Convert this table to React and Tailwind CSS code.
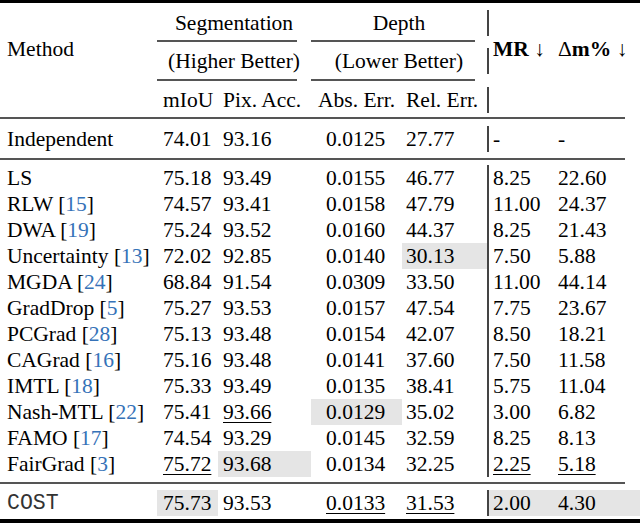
const cols = [
  'w-[157px] pl-[7px]',
  'w-[61px] pl-[6px]',
  'w-[93px] pl-[5px]',
  'w-[91px] pl-[15px]',
  'w-[85px] pl-[4px]',
  'w-[63px] pl-[4px] border-l-2 border-[#444]',
  'w-[90px] pl-[8px]',
];

const Cite = ({ n }) => (
  <>
    {' '}[<span className="text-[#3572b8]">{n}</span>]
  </>
);

// s = shaded, u = underlined
const rows = [
  ['LS', null, '75.18', '93.49', '0.0155', '46.77', '8.25', '22.60'],
  ['RLW', 15, '74.57', '93.41', '0.0158', '47.79', '11.00', '24.37'],
  ['DWA', 19, '75.24', '93.52', '0.0160', '44.37', '8.25', '21.43'],
  ['Uncertainty', 13, '72.02', '92.85', '0.0140', { v: '30.13', s: true }, '7.50', '5.88'],
  ['MGDA', 24, '68.84', '91.54', '0.0309', '33.50', '11.00', '44.14'],
  ['GradDrop', 5, '75.27', '93.53', '0.0157', '47.54', '7.75', '23.67'],
  ['PCGrad', 28, '75.13', '93.48', '0.0154', '42.07', '8.50', '18.21'],
  ['CAGrad', 16, '75.16', '93.48', '0.0141', '37.60', '7.50', '11.58'],
  ['IMTL', 18, '75.33', '93.49', '0.0135', '38.41', '5.75', '11.04'],
  ['Nash-MTL', 22, '75.41', { v: '93.66', u: true }, { v: '0.0129', s: true }, '35.02', '3.00', '6.82'],
  ['FAMO', 17, '74.54', '93.29', '0.0145', '32.59', '8.25', '8.13'],
  ['FairGrad', 3, { v: '75.72', u: true }, { v: '93.68', s: true }, '0.0134', '32.25', { v: '2.25', u: true }, { v: '5.18', u: true }],
];

function Cell({ i, c }) {
  const o = typeof c === 'string' ? { v: c } : c;
  return (
    <div className={`${cols[i]} h-[26px] ${o.s ? 'bg-[#e5e5e5]' : ''}`}>
      <span className={o.u ? 'underline decoration-1 underline-offset-[3px]' : ''}>{o.v}</span>
    </div>
  );
}

function Row({ name, cite, cells, mono }) {
  return (
    <div className="flex h-[26px]">
      <div className={`${cols[0]} h-[26px] ${mono ? "font-['Liberation_Mono',monospace] text-[#333]" : ''}`}>
        {name}
        {cite != null && <Cite n={cite} />}
      </div>
      {cells.map((c, i) => (
        <Cell key={i} i={i + 1} c={c} />
      ))}
    </div>
  );
}

const Midrule = () => <div className="w-[625px] h-[2px] bg-[#555]" />;

export default function App() {
  return (
    <div className="w-[640px] h-[526px] bg-white text-black font-['Liberation_Serif',serif] text-[21.5px] leading-[26px] overflow-hidden">
      <div className="h-[3px] bg-black" />
      <div className="h-[7px]" />

      {/* header */}
      <div className="flex">
        <div className="w-[157px] pl-[7px] pt-[26px]">Method</div>
        <div className="w-[332px] flex flex-col">
          <div className="flex h-[26px] border-r-2 border-[#444]">
            <div className="w-[154px] text-center">Segmentation</div>
            <div className="w-[176px] text-center">Depth</div>
          </div>
          <div className="h-[4px]" />
          <div className="flex h-[2px]">
            <div className="w-[140px] bg-[#555]" />
            <div className="w-[14px]" />
            <div className="w-[164px] bg-[#555]" />
          </div>
          <div className="h-[6px]" />
          <div className="flex h-[26px] border-r-2 border-[#444]">
            <div className="w-[154px] text-center">(Higher Better)</div>
            <div className="w-[176px] text-center">(Lower Better)</div>
          </div>
          <div className="h-[5px]" />
          <div className="flex h-[2px]">
            <div className="w-[140px] bg-[#555]" />
            <div className="w-[14px]" />
            <div className="w-[164px] bg-[#555]" />
          </div>
          <div className="h-[6px]" />
          <div className="flex h-[26px] border-r-2 border-[#444]">
            <div className="w-[61px] pl-[6px]">mIoU</div>
            <div className="w-[93px] pl-[5px]">Pix. Acc.</div>
            <div className="w-[91px] pl-[7px] whitespace-nowrap">Abs. Err.</div>
            <div className="w-[85px] pl-[4px] whitespace-nowrap">Rel. Err.</div>
          </div>
        </div>
        <div className="flex pt-[26px] h-[52px]">
          <div className="w-[61px] pl-[4px] whitespace-nowrap">
            <b>MR</b> ↓
          </div>
          <div className="w-[90px] pl-[8px] whitespace-nowrap">
            Δ<b>m%</b> ↓
          </div>
        </div>
      </div>

      <div className="h-[4px]" />
      <Midrule />
      <div className="h-[7px]" />
      <Row name="Independent" cells={['74.01', '93.16', '0.0125', '27.77', '-', '-']} />
      <div className="h-[6px]" />
      <Midrule />
      <div className="h-[5px]" />

      {rows.map(([name, cite, ...cells]) => (
        <Row key={name} name={name} cite={cite} cells={cells} />
      ))}

      <div className="h-[5px]" />
      <Midrule />
      <div className="h-[6px]" />
      <Row
        name="COST"
        mono
        cells={[
          { v: '75.73', s: true },
          '93.53',
          { v: '0.0133', u: true },
          { v: '31.53', u: true },
          { v: '2.00', s: true },
          { v: '4.30', s: true },
        ]}
      />
      <div className="h-[3px]" />
      <div className="h-[4px] bg-black" />
    </div>
  );
}
